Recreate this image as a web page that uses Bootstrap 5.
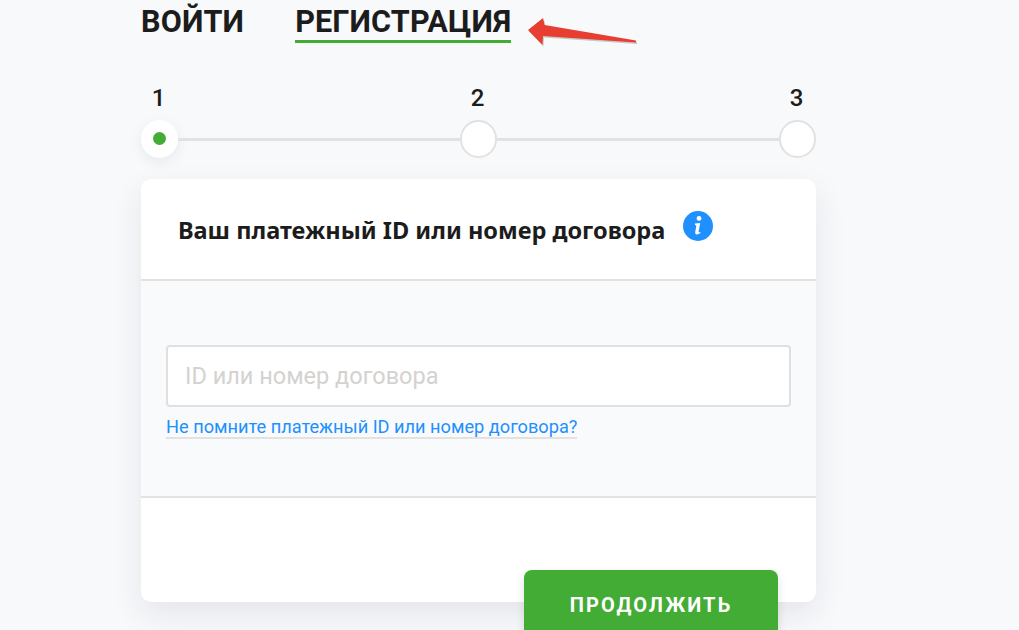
<!DOCTYPE html>
<html lang="ru">
<head>
<meta charset="utf-8">
<title>Регистрация</title>
<link href="https://cdn.jsdelivr.net/npm/bootstrap@5.3.0/dist/css/bootstrap.min.css" rel="stylesheet">
<style>
html, body { height: 630px; overflow: hidden; }
body { background: #f8f9fb; font-family: Roboto, "Liberation Sans", sans-serif; color: #1c1c1c; }
.pg { width: 675px; margin-left: 141px; }
.tabs { gap: 52px; padding-top: 4px; height: 71px; position: relative; }
.tabitem { font-size: 30.6px; font-weight: 700; line-height: 35px; color: #1c1c1c; text-decoration: none; height: 35px; letter-spacing: .15px; }
.tabitem.on { border-bottom: 3px solid #43ac35; height: 39px; margin-left: -1px; }
.arrowmark { position: absolute; left: 387px; top: 13px; }
.stepnums { height: 49px; padding-top: 13px; font-size: 24px; line-height: 28px; font-weight: 500; }
.stepnums span { width: 37px; padding-right: 2px; text-align: center; }
.stepline { height: 38px; }
.dot { width: 37.4px; height: 37.4px; border-radius: 50%; background: #fff; border: 2px solid #e2e2e2; flex: none; }
.dot.on { border: 0; box-shadow: 0 4px 14px rgba(0,0,0,.07); }
.dot.on i { display: block; width: 13px; height: 13px; border-radius: 50%; background: #43ac35; }
.linkbar { height: 3px; background: #e2e2e2; }
.panel { margin-top: 21px; height: 423px; background: #fff; border-radius: 10px; box-shadow: 0 12px 32px rgba(30,35,50,.09); }
.panel-top { flex: none; height: 102px; border-bottom: 2px solid #e2e2e2; padding: 33px 0 0 37px; gap: 18px; }
.panel-top h2 { font-family: "Noto Sans", sans-serif; font-size: 23.55px; font-weight: 700; line-height: 36px; margin: 0; color: #1c1c1c; }
.info { margin-top: -1px; flex: none; }
.panel-mid { flex: none; height: 217px; background: #f9fafc; border-bottom: 2px solid #e2e2e2; padding: 64px 25px 0; }
.idfield { height: 62px; border: 2px solid #e0e0e0; border-radius: 4px; padding: 0 17px; font-size: 23.5px; color: #1c1c1c; }
.idfield::placeholder { color: #d4d2d0; opacity: 1; }
.idfield:focus { border-color: #e0e0e0; box-shadow: none; }
.forgot { display: inline-block; margin-top: 9px; font-size: 18.2px; line-height: 21px; color: #1e90ff; text-decoration: none; border-bottom: 2px solid #e2e2e2; }
.panel-end { flex: none; padding: 72px 38px 0 0; }
.go { width: 254px; height: 72px; background: #43ac35; border: 0; border-radius: 8px; color: #fff; font-size: 20px; font-weight: 700; letter-spacing: 2.1px; padding: 0 0 2px; box-shadow: 0 4px 10px rgba(0,0,0,.12); }
.go:hover { background: #43ac35; color: #fff; }
</style>
</head>
<body>
<div class="pg">
  <div class="tabs d-flex align-items-start">
    <a class="tabitem" href="#">ВОЙТИ</a>
    <a class="tabitem on" href="#">РЕГИСТРАЦИЯ</a>
    <svg class="arrowmark" width="112" height="36" viewBox="0 0 112 36" aria-hidden="true">
      <path d="M0 17 L15 5 L16.500 12 L108 27.500 L108 29.500 L15 23 L14.500 32 Z" fill="#c8c8c8" transform="translate(1 1.500)"/>
      <path d="M0 17 L15 5 L16.500 12 L108 27.500 L108 29.500 L15 23 L14.500 32 Z" fill="#e83d31"/>
    </svg>
  </div>
  <div class="stepnums d-flex justify-content-between"><span>1</span><span>2</span><span>3</span></div>
  <div class="stepline d-flex align-items-center">
    <div class="dot on d-flex align-items-center justify-content-center"><i></i></div>
    <div class="linkbar flex-grow-1"></div>
    <div class="dot"></div>
    <div class="linkbar flex-grow-1"></div>
    <div class="dot"></div>
  </div>
  <div class="panel d-flex flex-column">
    <div class="panel-top d-flex align-items-start">
      <h2>Ваш платежный ID или номер договора</h2>
      <svg class="info" width="30" height="30" viewBox="0 0 30 30" aria-hidden="true">
        <circle cx="15" cy="15" r="15" fill="#1e90ff"/>
        <circle cx="16" cy="7.400" r="2.400" fill="#fff"/>
        <path d="M12 12.600 L17.200 12 L15.600 20.800 Q15.500 21.800 17.200 21 L17.500 22 Q15.200 23.800 13.200 23.400 Q11.800 23 12.200 21 L13.400 14.400 L12 14 Z" fill="#fff"/>
      </svg>
    </div>
    <div class="panel-mid">
      <input class="form-control idfield" type="text" placeholder="ID или номер договора">
      <a class="forgot" href="#">Не помните платежный ID или номер договора?</a>
    </div>
    <div class="panel-end d-flex justify-content-end">
      <button class="btn go" type="button">ПРОДОЛЖИТЬ</button>
    </div>
  </div>
</div>
<script src="https://cdn.jsdelivr.net/npm/bootstrap@5.3.0/dist/js/bootstrap.bundle.min.js"></script>
</body>
</html>
